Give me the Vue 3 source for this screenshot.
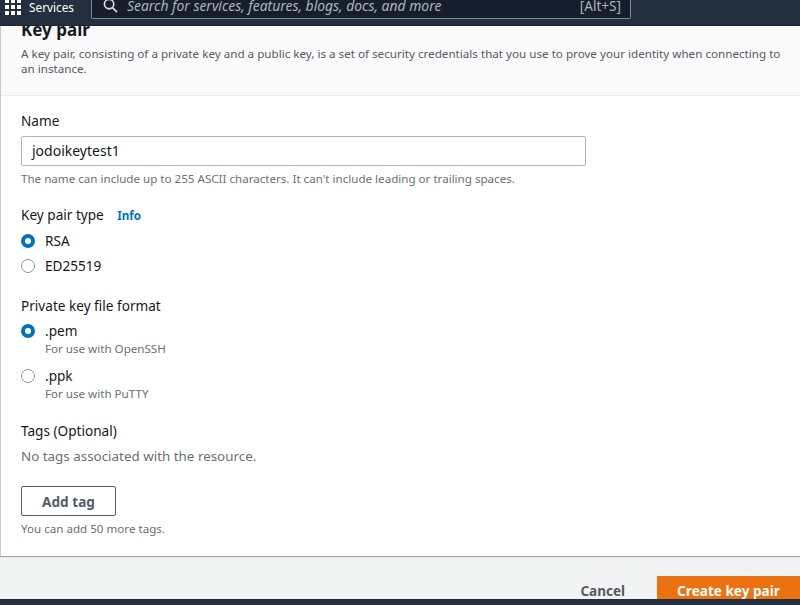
<script setup>
const apps = Array.from({ length: 9 })
const keyTypes = [
  { label: 'RSA', on: true },
  { label: 'ED25519', on: false }
]
const formats = [
  { label: '.pem', hint: 'For use with OpenSSH', on: true },
  { label: '.ppk', hint: 'For use with PuTTY', on: false }
]
</script>

<template>
  <div class="page">
    <nav class="nav">
      <div class="grid"><i v-for="(a, i) in apps" :key="i"></i></div>
      <span class="services">Services</span>
      <div class="search">
        <svg class="mag" width="15" height="15" viewBox="0 0 16 16" fill="none" stroke="#d5dbdb" stroke-width="1.8">
          <circle cx="6.5" cy="6.5" r="5"/><path d="M10.2 10.2 15 15"/>
        </svg>
        <span class="ph">Search for services, features, blogs, docs, and more</span>
        <span class="kbd">[Alt+S]</span>
      </div>
    </nav>

    <main class="main">
      <section class="card">
        <header class="head">
          <h2>Key pair</h2>
          <p>A key pair, consisting of a private key and a public key, is a set of security credentials that you use to prove your identity when connecting to an instance.</p>
        </header>
        <div class="body">
          <div class="field name">
            <label>Name</label>
            <div class="input">jodoikeytest1</div>
            <small>The name can include up to 255 ASCII characters. It can't include leading or trailing spaces.</small>
          </div>

          <div class="field type">
            <label>Key pair type <a>Info</a></label>
            <div class="opts">
              <div v-for="k in keyTypes" :key="k.label" class="opt">
                <span class="radio" :class="{ on: k.on }"></span><span>{{ k.label }}</span>
              </div>
            </div>
          </div>

          <div class="field format">
            <label>Private key file format</label>
            <div class="fopts">
              <div v-for="f in formats" :key="f.label" class="opt top">
                <span class="radio" :class="{ on: f.on }"></span>
                <div><div>{{ f.label }}</div><small>{{ f.hint }}</small></div>
              </div>
            </div>
          </div>

          <div class="field tags">
            <label>Tags (Optional)</label>
            <p class="none">No tags associated with the resource.</p>
            <button class="add">Add tag</button>
            <small>You can add 50 more tags.</small>
          </div>
        </div>
      </section>

      <div class="actions">
        <button class="cancel">Cancel</button>
        <button class="create">Create key pair</button>
      </div>
    </main>

    <footer class="foot"></footer>
  </div>
</template>

<style>
html, body { margin: 0; background: #f2f3f3; }
</style>

<style scoped>
.page {
  position: relative;
  width: 800px;
  height: 605px;
  overflow: hidden;
  display: flex;
  flex-direction: column;
  font-family: "Noto Sans", "Open Sans", sans-serif;
  font-size: 13.6px;
  color: #16191f;
  background: #f2f3f3;
}
.nav {
  height: 26px;
  flex: none;
  background: #232f3e;
  border-bottom: 1px solid #1b2430;
  box-sizing: border-box;
  display: flex;
  align-items: flex-start;
  position: relative;
  z-index: 2;
}
.grid {
  display: grid;
  grid-template-columns: repeat(3, 4px);
  gap: 2px;
  margin: -1px 0 0 5px;
  width: 16px;
}
.grid i { width: 4px; height: 4px; background: #fff; display: block; }
.services { color: #fff; font-size: 11.8px; line-height: 14px; margin-left: 8px; }
.search {
  margin-left: 17px;
  width: 540px;
  height: 19px;
  box-sizing: border-box;
  background: #161e2d;
  border: 1px solid #7d8998;
  border-top: 0;
  border-radius: 0 0 2px 2px;
  display: flex;
  align-items: flex-start;
  color: #aab7b8;
  font-size: 13.9px;
  line-height: 12px;
}
.mag { margin: -2px 0 0 11px; flex: none; }
.ph { font-style: italic; margin-left: 9px; flex: 1; }
.kbd { margin-right: 9px; font-size: 13.6px; }
.main { flex: 1; min-height: 0; display: flex; flex-direction: column; }
.card {
  height: 530px;
  flex: none;
  display: flex;
  flex-direction: column;
  background: #fff;
  border-left: 1px solid #c9cccc;
  box-shadow: 0 1px 1px rgba(0, 28, 36, .35);
  box-sizing: border-box;
}
.head {
  height: 70px;
  flex: none;
  box-sizing: border-box;
  background: #fafafa;
  border-bottom: 1px solid #eaeded;
  padding-left: 20px;
  padding-right: 16px;
}
.head h2 {
  margin: -8px 0 0;
  font-size: 17px;
  line-height: 24px;
  font-weight: 700;
}
.head p {
  margin: 4px 0 0;
  font-size: 11.65px;
  line-height: 15px;
  color: #545b64;
}
.body { padding: 15px 20px 0; }
.field label { display: block; line-height: 20px; }
.field small { display: block; font-size: 11.6px; line-height: 15px; color: #687078; }
.input {
  width: 565px;
  height: 30px;
  box-sizing: border-box;
  border: 1px solid #aab7b8;
  border-radius: 2px;
  padding: 0 10px;
  line-height: 28px;
  font-size: 14px;
  margin-top: 5px;
}
.name small { margin-top: 5px; }
.type { margin-top: 19px; }
.type a { color: #0073bb; font-weight: 700; font-size: 11.6px; margin-left: 10px; }
.opts { margin-top: 5px; display: flex; flex-direction: column; gap: 5px; }
.opt { display: flex; align-items: center; gap: 10px; line-height: 20px; }
.opt.top { align-items: flex-start; }
.opt.top .radio { margin-top: 3px; }
.radio {
  width: 14px;
  height: 14px;
  box-sizing: border-box;
  border-radius: 50%;
  border: 1px solid #879596;
  background: #fff;
  flex: none;
}
.radio.on { border: 4px solid #0073bb; }
.format { margin-top: 20px; }
.fopts { margin-top: 5px; display: flex; flex-direction: column; gap: 10px; }
.tags { margin-top: 20px; }
.none { margin: 5px 0 0; line-height: 20px; font-size: 13.4px; color: #687078; }
.add {
  display: block;
  margin-top: 20px;
  width: 95px;
  height: 30px;
  box-sizing: border-box;
  background: #fff;
  border: 1px solid #545b64;
  border-radius: 2px;
  color: #545b64;
  font: 700 13.6px "Noto Sans", sans-serif;
  padding: 0;
}
.tags small { margin-top: 5px; }
.actions {
  flex: 1;
  display: flex;
  justify-content: flex-end;
  align-items: flex-start;
  padding-top: 20px;
  min-height: 0;
}
.cancel, .create {
  font: 700 13.5px "Noto Sans", sans-serif;
  border: 0;
  height: 29px;
  padding: 0;
}
.cancel { background: none; color: #545b64; margin-right: 32px; }
.create { background: #ec7211; color: #fff; width: 143px; font-size: 13.6px; }
.foot { height: 6px; flex: none; background: #232f3e; position: relative; z-index: 2; }
</style>
